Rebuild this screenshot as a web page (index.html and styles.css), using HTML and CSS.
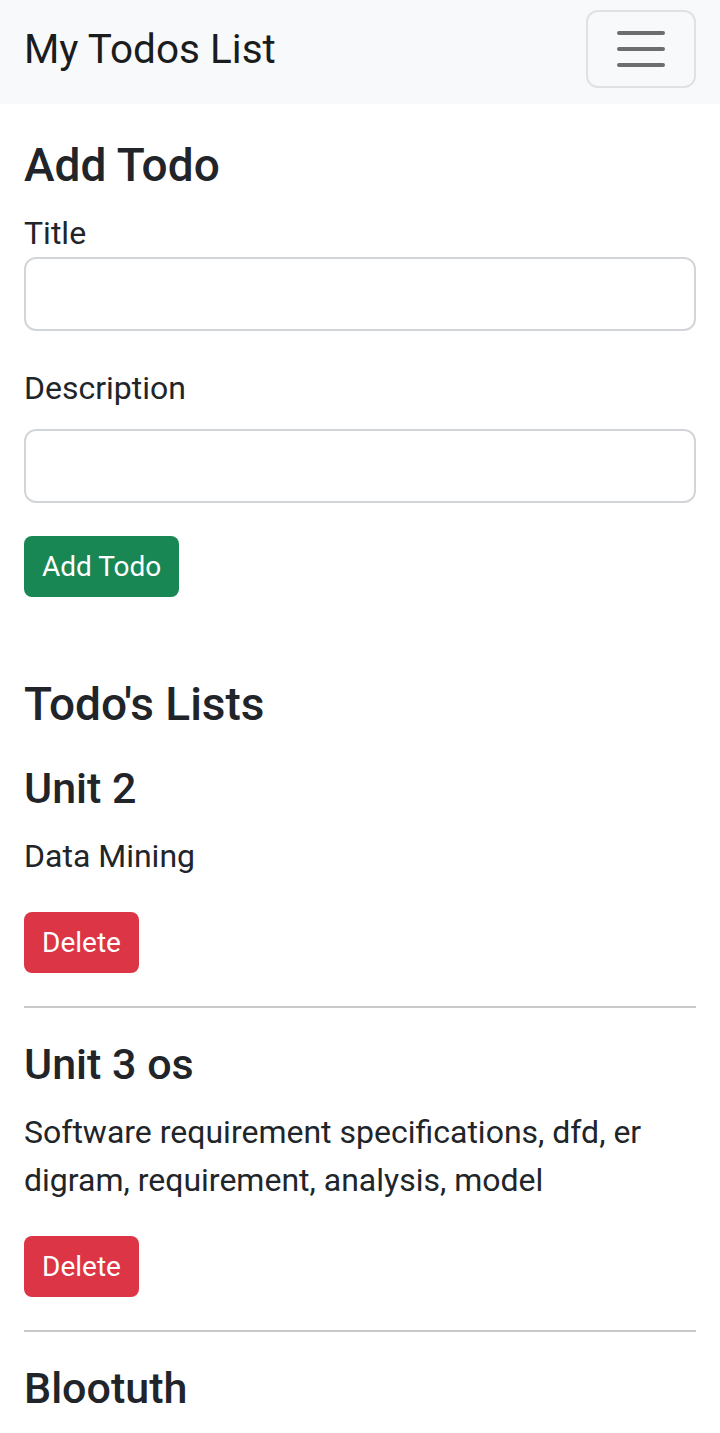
FILE: index.html
```html
<!DOCTYPE html>
<html lang="en">
<head>
<meta charset="utf-8">
<title>My Todos List</title>
<link rel="stylesheet" href="styles.css">
</head>
<body>
<nav class="navbar">
  <a class="brand" href="#">My Todos List</a>
  <button class="toggler" type="button" aria-label="Toggle navigation">
    <svg class="toggler-icon" viewBox="0 0 30 30" width="60" height="60" aria-hidden="true">
      <path d="M4 7h22M4 15h22M4 23h22" stroke="#6b6d70" stroke-width="2" stroke-linecap="round" fill="none"/>
    </svg>
  </button>
</nav>

<main class="container">
  <h2 class="title-add">Add Todo</h2>
  <form class="todo-form">
    <label class="label label-title" for="title">Title</label>
    <input class="field" id="title" type="text">
    <label class="label label-desc" for="desc">Description</label>
    <input class="field" id="desc" type="text">
    <button class="btn btn-success" type="button">Add Todo</button>
  </form>

  <h3 class="title-list">Todo's Lists</h3>

  <div class="todo">
    <h5 class="todo-title">Unit 2</h5>
    <p class="todo-desc">Data Mining</p>
    <button class="btn btn-danger" type="button">Delete</button>
  </div>
  <hr class="sep">
  <div class="todo">
    <h5 class="todo-title">Unit 3 os</h5>
    <p class="todo-desc">Software requirement specifications, dfd, er digram, requirement, analysis, model</p>
    <button class="btn btn-danger" type="button">Delete</button>
  </div>
  <hr class="sep">
  <div class="todo">
    <h5 class="todo-title">Blootuth</h5>
  </div>
</main>
</body>
</html>
```

FILE: styles.css
```css
* { box-sizing: border-box; }

body {
  margin: 0;
  font-family: Roboto, "Liberation Sans", Arial, sans-serif;
  color: #212529;
  background: #fff;
}

.navbar {
  background: #f8f9fa;
  height: 104px;
  padding: 10px 24px 16px;
  display: flex;
  justify-content: space-between;
  align-items: flex-start;
}

.brand {
  font-size: 40.5px;
  line-height: 60px;
  margin-top: 9px;
  color: #1b1c1d;
  text-decoration: none;
}

.toggler {
  width: 110px;
  height: 78px;
  border: 2px solid #e0e1e2;
  border-radius: 12px;
  background: transparent;
  padding: 0;
  display: flex;
  align-items: center;
  justify-content: center;
}

.toggler-icon { display: block; }

.container {
  padding: 0 24px;
}

.title-add {
  margin: 34px 0 16px;
  font-size: 46px;
  font-weight: 500;
  line-height: 55.2px;
}

.todo-form {
  display: flex;
  flex-direction: column;
  align-items: flex-start;
}

.label {
  display: block;
  font-size: 32px;
  line-height: 48px;
}

.label-title { margin-bottom: 0; }
.label-desc { margin-bottom: 17px; }

.field {
  width: 100%;
  height: 74px;
  border: 2px solid #d3d6d9;
  border-radius: 12px;
  background: #fff;
  margin: 0 0 33px;
  font-size: 32px;
  padding: 0 24px;
  font-family: inherit;
}

.btn {
  height: 61px;
  padding: 0 18px;
  border: 0;
  border-radius: 8px;
  color: #fff;
  font-family: inherit;
  font-size: 28px;
  line-height: 61px;
}

.btn-success { background: #198754; }
.btn-danger { background: #dc3545; }

.title-list {
  margin: 80px 0 31px;
  font-size: 46px;
  font-weight: 500;
  line-height: 55.2px;
}

.todo-title {
  margin: 0 0 17px;
  font-size: 43px;
  font-weight: 500;
  line-height: 51.6px;
}

.todo-desc {
  margin: 0 0 32px;
  font-size: 32px;
  line-height: 48px;
}

.sep {
  margin: 33px 0 31px;
  border: 0;
  border-top: 2px solid #c8c9ca;
  height: 0;
}
```
